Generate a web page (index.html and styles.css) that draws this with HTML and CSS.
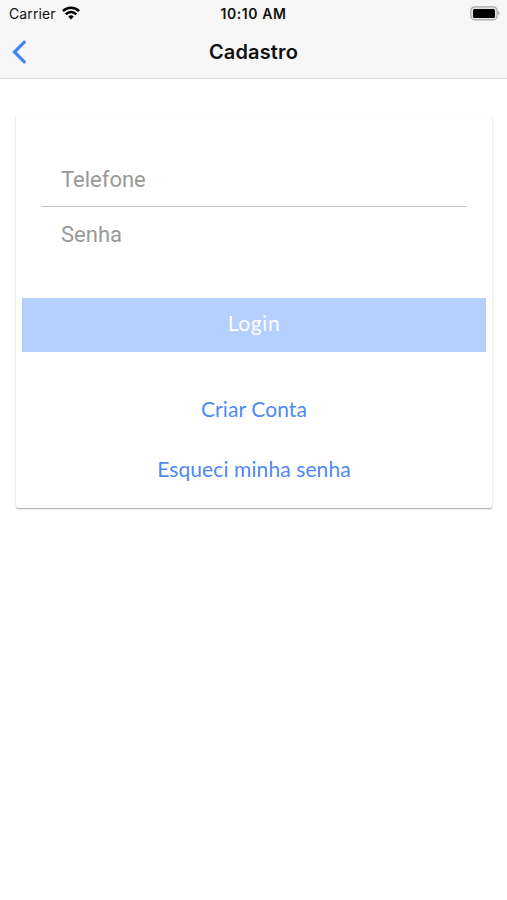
FILE: index.html
```html
<!DOCTYPE html>
<html lang="pt-BR">
<head>
<meta charset="utf-8">
<meta name="viewport" content="width=device-width, initial-scale=1">
<title>Cadastro</title>
<link rel="stylesheet" href="styles.css">
</head>
<body>
<header class="header">
  <div class="status">
    <div class="carrier"><span class="carrier-name">Carrier</span>
      <svg class="wifi" viewBox="0 0 18 14" width="18" height="14" fill="none" stroke="#000" stroke-width="2.5"><path d="M.9 5.100a11.500 11.500 0 0 1 16.200 0M3.700 8.300a7.500 7.500 0 0 1 10.600 0"/><path d="M6.200 10.700a4 4 0 0 1 5.600 0L9 13.500z" fill="#000" stroke="none"/></svg>
    </div>
    <div class="clock"><span>10:10 AM</span></div>
    <svg class="battery" viewBox="0 0 30 15" width="30" height="15"><rect x=".8" y=".8" width="26.400" height="13" rx="4" fill="#e4e4e4" stroke="#a9a9a9" stroke-width="1.200"/><rect x="3" y="3" width="22" height="9" rx="1.500"/><path d="M28.400 5.100q2.400 2.200 0 4.400z" fill="#a0a0a0"/></svg>
  </div>
  <nav class="navbar">
    <a class="back" href="#" aria-label="Voltar"><svg viewBox="0 0 16 24" width="16" height="24" fill="none" stroke="#4285f4" stroke-width="3.200" stroke-linecap="round" stroke-linejoin="miter"><path d="M13.300 2.200 3.500 12l9.800 9.800"/></svg></a>
    <h1 class="title"><span>Cadastro</span></h1>
  </nav>
</header>
<main class="card">
  <div class="field phone"><span>Telefone</span></div>
  <div class="field password"><span>Senha</span></div>
  <button class="login" type="button"><span>Login</span></button>
  <a class="link create" href="#">Criar Conta</a>
  <a class="link forgot" href="#">Esqueci minha senha</a>
</main>
</body>
</html>
```
FILE: styles.css
```css
* { box-sizing: border-box; }
body { margin: 0; min-height: 900px; background: #fff; font-family: Inter, sans-serif; color: #111; }
.header { height: 79px; background: #f7f7f7; border-bottom: 1px solid #dadada; }
.status { display: grid; grid-template-columns: 1fr auto 1fr; height: 27px; align-items: center; padding: 0 7px 0 9px; }
.carrier { display: flex; align-items: center; gap: 6px; font-size: 14px; line-height: 18px; letter-spacing: .1px; }
.wifi { margin-top: -2px; }
.clock { font-size: 14px; line-height: 18px; font-weight: 600; letter-spacing: .55px; margin: 0 2px 0 0; }
.battery { justify-self: end; }
.navbar { display: grid; grid-template-columns: 40px 1fr 40px; height: 50px; align-items: center; }
.back { display: flex; padding-left: 11px; }
.title { margin: 0; text-align: center; font-size: 20px; line-height: 26px; font-weight: 600; letter-spacing: .15px; }
.card { display: flex; flex-direction: column; margin: 36px 15px 0 16px; height: 393px; padding: 37px 6px 0; border-radius: 2px; background: #fff; box-shadow: 0 1px 2px rgba(0,0,0,.22), 0 1px 1px rgba(0,0,0,.16); }
.field { height: 55px; margin: 0 20px 0 19px; padding: 0 20px; font: 22px/56px Roboto, sans-serif; color: #999; }
.phone { border-bottom: 1px solid #c4c4c4; }
.login { display: block; height: 54px; margin: 36px 0 0; padding: 0 0 4px; border: 0; background: #b5d0ff; color: #fff; font: 21px/50px Lato, sans-serif; letter-spacing: .6px; }
.link { align-self: center; height: 30px; color: #4d8af5; font: 21px/28px Lato, sans-serif; text-decoration: none; letter-spacing: .1px; }
.create { margin-top: 43px; }
.forgot { margin-top: 30px; }
```
